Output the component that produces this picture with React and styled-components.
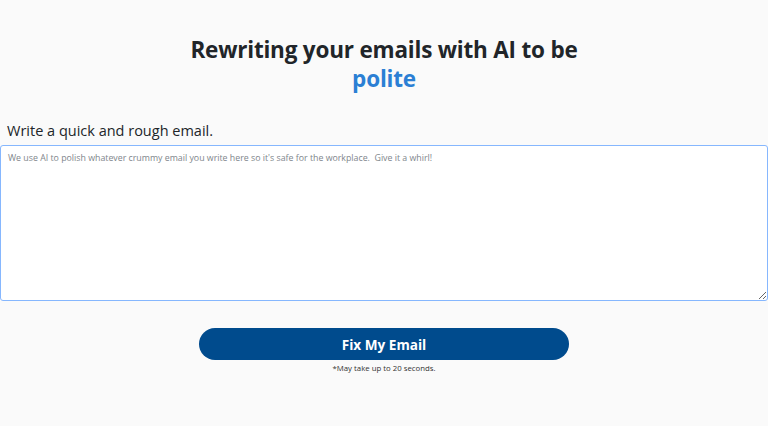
import React from 'react';
import styled, { createGlobalStyle } from 'styled-components';

const GlobalStyle = createGlobalStyle`
    html, body {
        margin: 0;
        padding: 0;
        background: #fafafa;
    }

    body {
        font-family: 'Open Sans', 'Noto Sans', sans-serif;
        color: #212529;
    }
`;

const Page = styled.main`
    display: flex;
    flex-direction: column;
    padding-top: 35px;
`;

const Title = styled.h1`
    margin: 0;
    text-align: center;
    font-size: 22.5px;
    font-weight: 700;
    line-height: 29px;
    color: #212529;
    letter-spacing: -0.2px;

    span {
        display: block;
        color: #2b7fd4;
    }
`;

const Form = styled.form`
    display: flex;
    flex-direction: column;
    margin-top: 28px;
`;

const Label = styled.label`
    padding-left: 7px;
    font-size: 14.5px;
    line-height: 20px;
    color: #212529;
    margin-bottom: 4px;
`;

const EmailBox = styled.textarea`
    box-sizing: border-box;
    width: 100%;
    height: 156px;
    margin: 0;
    padding: 5px 7px;
    border: 1px solid #86b7fe;
    border-radius: 3px;
    background: #fff;
    font-family: 'Open Sans', 'Noto Sans', sans-serif;
    font-size: 8.8px;
    line-height: 14px;
    color: #212529;
    outline: none;
    resize: vertical;

    &::placeholder {
        color: #80868c;
    }
`;

const Actions = styled.div`
    display: flex;
    flex-direction: column;
    align-items: center;
    margin-top: 27px;
`;

const FixButton = styled.button`
    width: 370px;
    height: 32px;
    border: 0;
    border-radius: 16px;
    background: #004b8d;
    color: #fff;
    font-family: 'Open Sans', 'Noto Sans', sans-serif;
    font-size: 13.6px;
    font-weight: 700;
    cursor: pointer;
`;

const Note = styled.p`
    margin: 2px 0 0;
    font-size: 7.8px;
    line-height: 12px;
    color: #333;
`;

export default function App() {
    return (
        <>
            <GlobalStyle />
            <Page>
                <Title>
                    Rewriting your emails with AI to be
                    <span>polite</span>
                </Title>

                <Form onSubmit={e => e.preventDefault()}>
                    <Label htmlFor="email">Write a quick and rough email.</Label>
                    <EmailBox
                        id="email"
                        placeholder="We use AI to polish whatever crummy email you write here so it's safe for the workplace.  Give it a whirl!"
                    />
                    <Actions>
                        <FixButton type="submit">Fix My Email</FixButton>
                        <Note>*May take up to 20 seconds.</Note>
                    </Actions>
                </Form>
            </Page>
        </>
    );
}
